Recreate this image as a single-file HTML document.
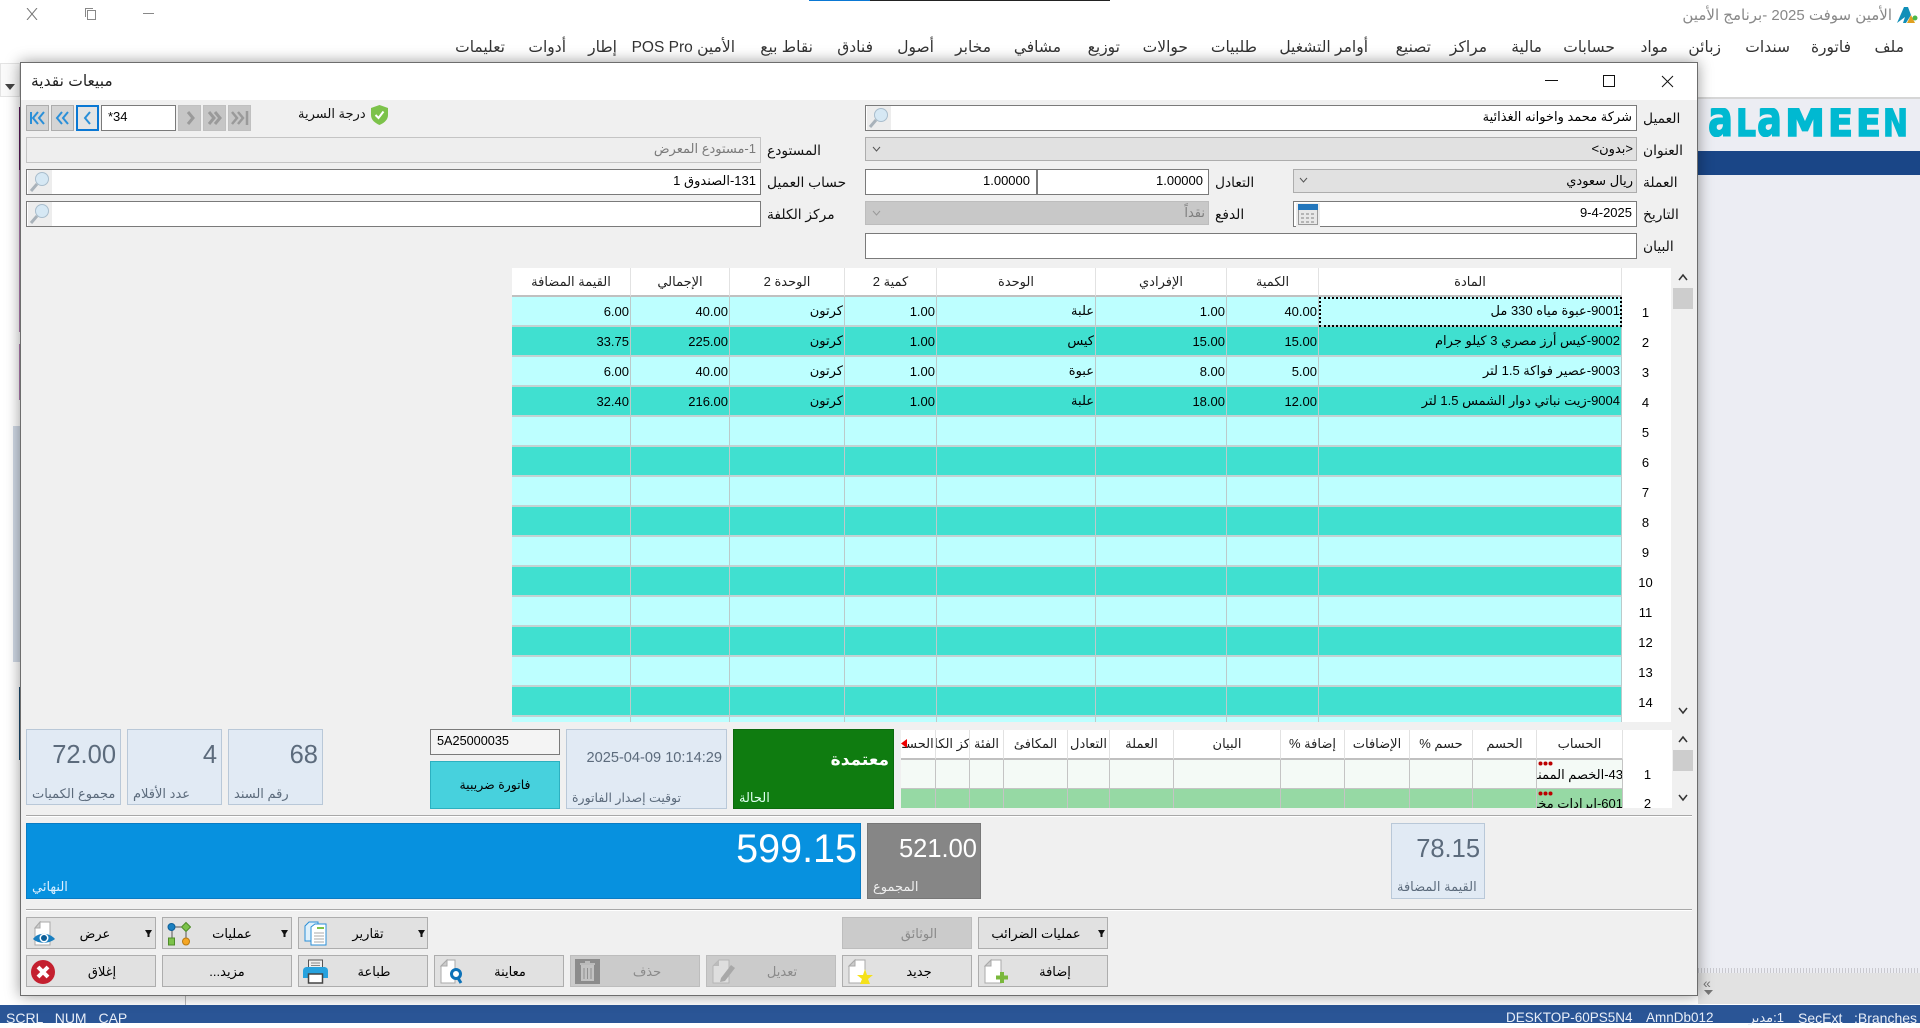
<!DOCTYPE html>
<html lang="ar"><head><meta charset="utf-8"><title>مبيعات نقدية</title>
<style>
*{box-sizing:border-box}
html,body{margin:0;padding:0;width:1920px;height:1023px;overflow:hidden;background:#fff;font-family:"Liberation Sans","DejaVu Sans",sans-serif;font-size:13px;color:#000}
.a{position:absolute}
.t{position:absolute;white-space:nowrap;height:20px;line-height:20px}
.r{direction:rtl}
.m{font-size:15.5px;color:#333;top:38px}
.f{position:absolute;background:#fff;border:1px solid #7a7a7a;height:26px;line-height:24px;direction:rtl;padding:0 4px;white-space:nowrap}
.s{position:absolute;background:#e1e1e1;border:1px solid #adadad;height:24px;line-height:22px;direction:rtl;padding:0 3px;white-space:nowrap}
.l{font-size:13.8px;color:#111;direction:rtl}
.g{position:absolute;width:24px;height:24px;background:#ededed;left:1px;top:0}
.nb{position:absolute;top:105px;width:23px;height:26px;background:#d4d4d4;border:1px solid #adadad}
.nd{background:#c6c6c6;border-color:#c0c0c0}
.st{position:absolute;background:#e1eaf4;border:1px solid #b9c8d8}
.st .n{position:absolute;right:4px;font-size:25.5px;color:#5c6b7c;white-space:nowrap}
.st .c{position:absolute;left:5px;font-size:13px;color:#5c6b7c;white-space:nowrap;direction:rtl}
.b{position:absolute;width:130px;height:32px;background:#e1e1e1;border:1px solid #adadad}
.bd{background:#cbcbcb;border-color:#bdbdbd;color:#8a8a8a}
.b2{top:955px}.b1{top:917px}
.bt{position:absolute;transform:translateX(-50%);white-space:nowrap;direction:rtl;font-size:13px;line-height:20px;height:20px}
.dd{position:absolute;width:9px;height:10px}
table{border-collapse:separate;border-spacing:0;table-layout:fixed;position:absolute;left:0;top:0}
#g td,#g th{height:30px;padding:0 1px;border-right:1px solid #bccaca;border-bottom:2px solid #c3d2d2;direction:rtl;text-align:right;white-space:nowrap;overflow:hidden;font-weight:normal;font-size:13px}
#g th{height:29px;text-align:center;background:#fff;border-right:1px solid #e2e2e2;border-bottom:2px solid #c0c0c0;color:#222}
#g .x{background:#bdffff}#g .y{background:#40e0d0}
#g td.h,#g th.h{background:#fff;border:0;text-align:center;padding-right:3px}
#d td,#d th{padding:0;direction:rtl;white-space:nowrap;overflow:hidden;font-weight:normal;font-size:13px;border-right:1px solid #c4c4c4}
#d th{height:30px;background:#fff;text-align:center;border-right:1px solid #e2e2e2;border-bottom:2px solid #c0c0c0;color:#222}
#d td{height:29px;border-bottom:1px solid #c4c4c4;text-align:right;vertical-align:bottom;padding-bottom:5px}
#d .p{background:#f4faf6}#d .q{background:#96d9a4}
#d .h{background:#fff!important;border:0!important;text-align:center!important;vertical-align:middle!important;padding-bottom:0}
</style></head><body>

<!-- page background -->
<div class="a" style="left:1698px;top:97px;width:222px;height:2px;background:#d6d6d6"></div>
<div class="a" style="left:1698px;top:99px;width:222px;height:870px;background:#ecedf3"></div>
<div class="a" style="left:1698px;top:151px;width:222px;height:24px;background:#1a4687"></div>
<div class="a" style="left:1698px;top:968px;width:222px;height:5px;background:repeating-linear-gradient(90deg,#c9c9cf 0 1px,#ecedf3 1px 3px)"></div>
<div class="a" style="left:1698px;top:973px;width:222px;height:31px;background:#e2e2e2"></div>
<div class="t" style="left:1703px;top:973px;color:#777;font-size:14px">«</div>
<svg class="a" style="left:1704px;top:990px" width="9" height="5"><path d="M0 0H9L4.500 5Z" fill="#777"/></svg>
<svg class="a" style="left:1707px;top:108px" width="202" height="29"><text y="28" font-family="DejaVu Sans" font-weight="bold" fill="#00b9d1" stroke="#00b9d1" stroke-width="1.500" font-size="38"><tspan x="1" font-size="50" textLength="25" lengthAdjust="spacingAndGlyphs">a</tspan><tspan x="29" textLength="20" lengthAdjust="spacingAndGlyphs">L</tspan><tspan x="50" font-size="50" textLength="25" lengthAdjust="spacingAndGlyphs">a</tspan><tspan x="78" textLength="40" lengthAdjust="spacingAndGlyphs">M</tspan><tspan x="121" textLength="25" lengthAdjust="spacingAndGlyphs">E</tspan><tspan x="149" textLength="25" lengthAdjust="spacingAndGlyphs">E</tspan><tspan x="176" textLength="25" lengthAdjust="spacingAndGlyphs">N</tspan></text></svg>

<!-- left strip -->
<div class="a" style="left:0;top:63px;width:20px;height:34px;background:#fafafa;border:1px solid #e4e4e4"></div>
<svg class="a" style="left:5px;top:84px" width="10" height="6"><path d="M0 0H10L5 6Z" fill="#444"/></svg>
<div class="a" style="left:19px;top:107px;width:1px;height:63px;background:#5a1a5a"></div>
<div class="a" style="left:19px;top:170px;width:1px;height:162px;background:#b47fb4"></div>
<div class="a" style="left:19px;top:344px;width:1px;height:56px;background:#b47fb4"></div>
<div class="a" style="left:13px;top:426px;width:7px;height:236px;background:#d0d9e5"></div>
<div class="a" style="left:19px;top:687px;width:1px;height:73px;background:#1b4a70"></div>
<div class="a" style="left:185px;top:996px;width:1px;height:9px;background:#bbb"></div>

<!-- top bar -->
<div class="a" style="left:809px;top:0;width:61px;height:1px;background:#0a78d4"></div>
<div class="a" style="left:870px;top:0;width:240px;height:1px;background:#222"></div>
<svg class="a" style="left:26px;top:8px" width="12" height="12" fill="none" stroke="#777"><path d="M1 0L11 12M11 0L1 12"/></svg>
<svg class="a" style="left:85px;top:8px" width="12" height="12" fill="none" stroke="#888"><rect x="2.500" y="2.500" width="8" height="9"/><path d="M0.500 9V0.500H8"/></svg>
<div class="a" style="left:143px;top:13px;width:11px;height:1px;background:#888"></div>
<div class="t r" style="right:28px;top:6px;color:#888;font-size:15px">الأمين سوفت 2025 -برنامج الأمين</div>
<svg class="a" style="left:1896px;top:6px" width="22" height="18"><path d="M1 17L8 1H12L15 9L10 17H7L9 11Z" fill="#118fb8"/><path d="M15 9L19 17H11Z" fill="#e0a020"/><circle cx="19" cy="12" r="2.500" fill="#4bb84b"/></svg>

<!-- menu -->
<div class="t m r" style="right:16px">ملف</div><div class="t m r" style="right:69px">فاتورة</div><div class="t m r" style="right:130px">سندات</div><div class="t m r" style="right:199px">زبائن</div><div class="t m r" style="right:252px">مواد</div><div class="t m r" style="right:305px">حسابات</div><div class="t m r" style="right:378px">مالية</div><div class="t m r" style="right:433px">مراكز</div><div class="t m r" style="right:489px">تصنيع</div><div class="t m r" style="right:552px">أوامر التشغيل</div><div class="t m r" style="right:663px">طلبيات</div><div class="t m r" style="right:732px">حوالات</div><div class="t m r" style="right:800px">توزيع</div><div class="t m r" style="right:859px">مشافي</div><div class="t m r" style="right:929px">مخابر</div><div class="t m r" style="right:986px">أصول</div><div class="t m r" style="right:1047px">فنادق</div><div class="t m r" style="right:1107px">نقاط بيع</div><div class="t m r" style="right:1185px">الأمين POS Pro</div><div class="t m r" style="right:1303px">إطار</div><div class="t m r" style="right:1354px">أدوات</div><div class="t m r" style="right:1415px">تعليمات</div>

<!-- status bar -->
<div class="a" style="left:0;top:1005px;width:1920px;height:18px;background:#2a5596"></div>
<div class="t" style="left:6px;top:1008px;color:#e8eef8;font-size:14px;word-spacing:8px">SCRL NUM CAP</div>
<div class="t" style="left:1506px;top:1008px;color:#e8eef8;font-size:13.5px">DESKTOP-60PS5N4</div>
<div class="t" style="left:1646px;top:1008px;color:#e8eef8;font-size:13.5px">AmnDb012</div>
<div class="t r" style="right:136px;top:1008px;color:#e8eef8;font-size:13px">1:مدير</div>
<div class="t" style="left:1798px;top:1008px;color:#e8eef8;font-size:14px">SecExt</div>
<div class="t" style="left:1854px;top:1008px;color:#e8eef8;font-size:14px">:Branches</div>

<!-- window -->
<div class="a" style="left:20px;top:62px;width:1678px;height:934px;background:#f0f0f0;border:1px solid #6d6d6d;box-shadow:0 0 14px rgba(0,0,0,.4)"></div>
<div class="a" style="left:21px;top:63px;width:1676px;height:37px;background:#fff"></div>
<div class="t r" style="left:31px;top:72px;font-size:15.5px;color:#222">مبيعات نقدية</div>
<div class="a" style="left:1545px;top:80px;width:13px;height:1px;background:#111"></div>
<div class="a" style="left:1603px;top:75px;width:12px;height:12px;border:1px solid #111"></div>
<svg class="a" style="left:1661px;top:75px" width="13" height="13" fill="none" stroke="#111"><path d="M1 1L12 12M12 1L1 12"/></svg>

<!-- nav -->
<div class="nb" style="left:26px"><svg width="21" height="24" fill="none" stroke="#2a8fd8" stroke-width="2"><path d="M4 6V18"/><path d="M11 6L6 12L11 18M17 6L12 12L17 18"/></svg></div>
<div class="nb" style="left:51px"><svg width="21" height="24" fill="none" stroke="#2a8fd8" stroke-width="2"><path d="M10 6L5 12L10 18M16 6L11 12L16 18"/></svg></div>
<div class="nb" style="left:76px;background:#e4e4e4;border:2px solid #0a78d4"><svg width="19" height="22" fill="none" stroke="#2a8fd8" stroke-width="2"><path d="M12 5L7 11L12 17"/></svg></div>
<div class="f" style="left:101px;top:105px;width:75px;direction:ltr;padding-left:6px;font-size:13px;line-height:22px">*34</div>
<div class="nb nd" style="left:178px"><svg width="21" height="24" fill="none" stroke="#9a9a9a" stroke-width="3"><path d="M9 6L14 12L9 18"/></svg></div>
<div class="nb nd" style="left:203px"><svg width="21" height="24" fill="none" stroke="#9a9a9a" stroke-width="3"><path d="M5 6L10 12L5 18M11 6L16 12L11 18"/></svg></div>
<div class="nb nd" style="left:228px"><svg width="21" height="24" fill="none" stroke="#9a9a9a" stroke-width="2.500"><path d="M3 6L8 12L3 18M9 6L14 12L9 18"/><path d="M18 5V19"/></svg></div>
<svg class="a" style="left:370px;top:105px" width="19" height="20"><path d="M9.500 0L18 3V10C18 15 14 18 9.500 20C5 18 1 15 1 10V3Z" fill="#7cc24a"/><path d="M5.500 10L8.500 13L13.500 6.500" fill="none" stroke="#fff" stroke-width="2"/></svg>
<div class="t r" style="left:298px;top:104px;font-size:13px;color:#111">درجة السرية</div>

<!-- form left -->
<div class="f" style="left:26px;top:137px;width:735px;background:#eee;border:1px solid #c4c4c4;color:#7a7a7a;line-height:22px">1-مستودع المعرض</div>
<div class="t l" style="left:767px;top:141px">المستودع</div>
<div class="f" style="left:26px;top:169px;width:735px;line-height:22px">131-الصندوق 1<span class="g" style="direction:ltr"><svg width="24" height="24" fill="none"><circle cx="14" cy="9" r="6.500" fill="#d6e8f4" stroke="#a9bdcc"/><path d="M9 14L3 21" stroke="#a9b2ba" stroke-width="3"/></svg></span></div>
<div class="t l" style="left:767px;top:173px">حساب العميل</div>
<div class="f" style="left:26px;top:201px;width:735px"><span class="g" style="direction:ltr"><svg width="24" height="24" fill="none"><circle cx="14" cy="9" r="6.500" fill="#d6e8f4" stroke="#a9bdcc"/><path d="M9 14L3 21" stroke="#a9b2ba" stroke-width="3"/></svg></span></div>
<div class="t l" style="left:767px;top:205px">مركز الكلفة</div>

<!-- form right -->
<div class="f" style="left:865px;top:105px;width:772px;line-height:22px">شركة محمد واخوانه الغذائية<span class="g" style="direction:ltr"><svg width="24" height="24" fill="none"><circle cx="14" cy="9" r="6.500" fill="#d6e8f4" stroke="#a9bdcc"/><path d="M9 14L3 21" stroke="#a9b2ba" stroke-width="3"/></svg></span></div>
<div class="t l" style="left:1643px;top:109px">العميل</div>
<div class="s" style="left:865px;top:137px;width:772px">&lt;بدون&gt;</div>
<svg class="a" style="left:872px;top:146px" width="9" height="6" fill="none" stroke="#555"><path d="M1 1L4.500 5L8 1"/></svg>
<div class="t l" style="left:1643px;top:141px">العنوان</div>
<div class="f" style="left:865px;top:169px;width:172px;text-align:right;direction:ltr;padding-right:6px;line-height:22px">1.00000</div>
<div class="f" style="left:1037px;top:169px;width:172px;text-align:right;direction:ltr;padding-right:5px;line-height:22px">1.00000</div>
<div class="t l" style="left:1215px;top:173px">التعادل</div>
<div class="s" style="left:1293px;top:169px;width:344px">ريال سعودي</div>
<svg class="a" style="left:1299px;top:177px" width="9" height="6" fill="none" stroke="#555"><path d="M1 1L4.500 5L8 1"/></svg>
<div class="t l" style="left:1643px;top:173px">العملة</div>
<div class="s" style="left:865px;top:201px;width:344px;background:#c8c8c8;border-color:#bdbdbd;color:#7e7e7e">نقداً</div>
<svg class="a" style="left:872px;top:210px" width="9" height="6" fill="none" stroke="#999"><path d="M1 1L4.500 5L8 1"/></svg>
<div class="t l" style="left:1215px;top:205px">الدفع</div>
<div class="f" style="left:1293px;top:201px;width:344px;line-height:22px;direction:ltr;text-align:right">9-4-2025</div>
<svg class="a" style="left:1296px;top:203px" width="24" height="24"><rect width="24" height="24" fill="#ededed"/><rect x="2.500" y="1.500" width="19" height="20" fill="#e8e8e8" stroke="#999"/><rect x="2" y="1" width="20" height="6" fill="#2276bc"/><g fill="#b5b5b5"><rect x="5" y="10" width="3" height="2"/><rect x="10" y="10" width="3" height="2"/><rect x="15" y="10" width="3" height="2"/><rect x="5" y="14" width="3" height="2"/><rect x="10" y="14" width="3" height="2"/><rect x="15" y="14" width="3" height="2"/><rect x="5" y="18" width="3" height="2"/><rect x="10" y="18" width="3" height="2"/><rect x="15" y="18" width="3" height="2"/></g></svg>
<div class="t l" style="left:1643px;top:205px">التاريخ</div>
<div class="f" style="left:865px;top:233px;width:772px"></div>
<div class="t l" style="left:1643px;top:237px">البيان</div>

<!-- main grid -->
<div id="g" class="a" style="left:512px;top:268px;width:1159px;height:454px;overflow:hidden;background:#fff">
<table style="width:1159px"><colgroup><col style="width:119px"><col style="width:99px"><col style="width:115px"><col style="width:92px"><col style="width:159px"><col style="width:131px"><col style="width:92px"><col style="width:303px"><col style="width:49px"></colgroup>
<tr><th>القيمة المضافة</th><th>الإجمالي</th><th>الوحدة 2</th><th>كمية 2</th><th>الوحدة</th><th>الإفرادي</th><th>الكمية</th><th>المادة</th><th class="h"></th></tr>
<tr class="x"><td>6.00</td><td>40.00</td><td>كرتون</td><td>1.00</td><td>علبة</td><td>1.00</td><td>40.00</td><td style="outline:2px dotted #000;outline-offset:-2px">9001-عبوة مياه 330 مل</td><td class="h">1</td></tr>
<tr class="y"><td>33.75</td><td>225.00</td><td>كرتون</td><td>1.00</td><td>كيس</td><td>15.00</td><td>15.00</td><td>9002-كيس أرز مصري 3 كيلو جرام</td><td class="h">2</td></tr>
<tr class="x"><td>6.00</td><td>40.00</td><td>كرتون</td><td>1.00</td><td>عبوة</td><td>8.00</td><td>5.00</td><td>9003-عصير فواكة 1.5 لتر</td><td class="h">3</td></tr>
<tr class="y"><td>32.40</td><td>216.00</td><td>كرتون</td><td>1.00</td><td>علبة</td><td>18.00</td><td>12.00</td><td>9004-زيت نباتي دوار الشمس 1.5 لتر</td><td class="h">4</td></tr>
<tr class="x"><td></td><td></td><td></td><td></td><td></td><td></td><td></td><td></td><td class="h">5</td></tr>
<tr class="y"><td></td><td></td><td></td><td></td><td></td><td></td><td></td><td></td><td class="h">6</td></tr>
<tr class="x"><td></td><td></td><td></td><td></td><td></td><td></td><td></td><td></td><td class="h">7</td></tr>
<tr class="y"><td></td><td></td><td></td><td></td><td></td><td></td><td></td><td></td><td class="h">8</td></tr>
<tr class="x"><td></td><td></td><td></td><td></td><td></td><td></td><td></td><td></td><td class="h">9</td></tr>
<tr class="y"><td></td><td></td><td></td><td></td><td></td><td></td><td></td><td></td><td class="h">10</td></tr>
<tr class="x"><td></td><td></td><td></td><td></td><td></td><td></td><td></td><td></td><td class="h">11</td></tr>
<tr class="y"><td></td><td></td><td></td><td></td><td></td><td></td><td></td><td></td><td class="h">12</td></tr>
<tr class="x"><td></td><td></td><td></td><td></td><td></td><td></td><td></td><td></td><td class="h">13</td></tr>
<tr class="y"><td></td><td></td><td></td><td></td><td></td><td></td><td></td><td></td><td class="h">14</td></tr>
<tr class="x"><td></td><td></td><td></td><td></td><td></td><td></td><td></td><td></td><td class="h"></td></tr>
</table></div>
<svg class="a" style="left:1677px;top:273px" width="12" height="8" fill="none" stroke="#333" stroke-width="1.500"><path d="M2 7L6 2L10 7"/></svg>
<div class="a" style="left:1673px;top:288px;width:20px;height:21px;background:#cdcdcd"></div>
<svg class="a" style="left:1677px;top:707px" width="12" height="8" fill="none" stroke="#333" stroke-width="1.500"><path d="M2 1L6 6L10 1"/></svg>

<!-- stat boxes -->
<div class="st" style="left:26px;top:729px;width:95px;height:76px"><span class="n" style="top:11px">72.00</span><span class="c" style="top:56px">مجموع الكميات</span></div>
<div class="st" style="left:127px;top:729px;width:95px;height:76px"><span class="n" style="top:11px">4</span><span class="c" style="top:56px">عدد الأقلام</span></div>
<div class="st" style="left:228px;top:729px;width:95px;height:76px"><span class="n" style="top:11px">68</span><span class="c" style="top:56px">رقم السند</span></div>
<div class="f" style="left:430px;top:729px;width:130px;direction:ltr;padding-left:6px;font-size:12.7px;background:#f4f4f4;line-height:22px">5A25000035</div>
<div class="a" style="left:430px;top:761px;width:130px;height:48px;background:#47d1dd;border:1px solid #2cb0c0;text-align:center;line-height:47px;direction:rtl;font-size:12.5px">فاتورة ضريبية</div>
<div class="st" style="left:566px;top:729px;width:161px;height:80px"><span class="n" style="top:20px;font-size:14.6px;white-space:nowrap">2025-04-09 10:14:29</span><span class="c" style="top:60px;font-size:12.500px">توقيت إصدار الفاتورة</span></div>
<div class="a" style="left:733px;top:729px;width:161px;height:80px;background:#0f7c10;border:1px solid #0c6a0d"><span class="a" style="right:4px;top:20px;color:#fff;font-size:17px;font-weight:bold;direction:rtl">معتمدة</span><span class="a" style="left:5px;top:60px;color:#dfe;font-size:13px;direction:rtl">الحالة</span></div>

<!-- lower grid -->
<div id="d" class="a" style="left:901px;top:730px;width:771px;height:78px;overflow:hidden;background:#fff">
<table style="width:771px"><colgroup><col style="width:35px"><col style="width:34px"><col style="width:34px"><col style="width:64px"><col style="width:42px"><col style="width:64px"><col style="width:107px"><col style="width:64px"><col style="width:65px"><col style="width:63px"><col style="width:64px"><col style="width:86px"><col style="width:49px"></colgroup>
<tr><th>الحسـ</th><th>كز الكلا</th><th>الفئة</th><th>المكافئ</th><th>التعادل</th><th>العملة</th><th>البيان</th><th>إضافة %</th><th>الإضافات</th><th>حسم %</th><th>الحسم</th><th>الحساب</th><th class="h"></th></tr>
<tr class="p"><td class="p"></td><td class="p"></td><td class="p"></td><td class="p"></td><td class="p"></td><td class="p"></td><td class="p"></td><td class="p"></td><td class="p"></td><td class="p"></td><td class="p"></td><td class="p">43-الخصم الممنوح</td><td class="h">1</td></tr>
<tr><td class="q"></td><td class="q"></td><td class="q"></td><td class="q"></td><td class="q"></td><td class="q"></td><td class="q"></td><td class="q"></td><td class="q"></td><td class="q"></td><td class="q"></td><td class="q">601-ايرادات مخزون</td><td class="h">2</td></tr>
</table></div>
<svg class="a" style="left:901px;top:739px" width="7" height="9"><path d="M0 4.500L6 0V9Z" fill="#e00"/></svg>
<svg class="a" style="left:1538px;top:761px" width="15" height="5"><circle cx="2.500" cy="2.500" r="2" fill="#b00"/><circle cx="7.500" cy="2.500" r="2" fill="#b00"/><circle cx="12.500" cy="2.500" r="2" fill="#b00"/></svg>
<svg class="a" style="left:1538px;top:791px" width="15" height="5"><circle cx="2.500" cy="2.500" r="2" fill="#b00"/><circle cx="7.500" cy="2.500" r="2" fill="#b00"/><circle cx="12.500" cy="2.500" r="2" fill="#b00"/></svg>
<svg class="a" style="left:1677px;top:735px" width="12" height="8" fill="none" stroke="#333" stroke-width="1.500"><path d="M2 7L6 2L10 7"/></svg>
<div class="a" style="left:1673px;top:750px;width:20px;height:21px;background:#cdcdcd"></div>
<svg class="a" style="left:1677px;top:794px" width="12" height="8" fill="none" stroke="#333" stroke-width="1.500"><path d="M2 1L6 6L10 1"/></svg>

<!-- separators -->
<div class="a" style="left:26px;top:815px;width:1666px;height:1px;background:#a8a8a8;border-bottom:0"></div>
<div class="a" style="left:26px;top:816px;width:1666px;height:1px;background:#fff"></div>
<div class="a" style="left:26px;top:909px;width:1666px;height:1px;background:#a8a8a8"></div>
<div class="a" style="left:26px;top:910px;width:1666px;height:1px;background:#fff"></div>

<!-- totals -->
<div class="a" style="left:26px;top:823px;width:835px;height:76px;background:#0791df;border:1px solid #0a7cc4"><span class="a" style="right:3px;top:3px;color:#fff;font-size:39.5px;white-space:nowrap">599.15</span><span class="a" style="left:5px;top:55px;color:#dcefff;font-size:13px;direction:rtl">النهائي</span></div>
<div class="a" style="left:867px;top:823px;width:114px;height:76px;background:#868686;border:1px solid #777"><span class="a" style="right:3px;top:11px;color:#fff;font-size:25.5px;white-space:nowrap">521.00</span><span class="a" style="left:5px;top:55px;color:#eee;font-size:13px;direction:rtl">المجموع</span></div>
<div class="st" style="left:1391px;top:823px;width:94px;height:76px"><span class="n" style="top:11px">78.15</span><span class="c" style="top:55px">القيمة المضافة</span></div>

<!-- buttons -->
<div class="b b1" style="left:26px"></div><div class="b b1" style="left:162px"></div><div class="b b1" style="left:298px"></div><div class="b b1 bd" style="left:842px"></div><div class="b b1" style="left:978px"></div>
<div class="b b2" style="left:26px"></div><div class="b b2" style="left:162px"></div><div class="b b2" style="left:298px"></div><div class="b b2" style="left:434px"></div><div class="b b2 bd" style="left:570px"></div><div class="b b2 bd" style="left:706px"></div><div class="b b2" style="left:842px"></div><div class="b b2" style="left:978px"></div>
<div class="bt" style="left:95px;top:924px">عرض</div><div class="bt" style="left:232px;top:924px">عمليات</div><div class="bt" style="left:368px;top:924px">تقارير</div><div class="bt" style="left:919px;top:924px;color:#8a8a8a">الوثائق</div><div class="bt" style="left:1036px;top:924px">عمليات الضرائب</div>
<div class="bt" style="left:102px;top:962px">إغلاق</div><div class="bt" style="left:227px;top:962px">مزيد...</div><div class="bt" style="left:374px;top:962px">طباعة</div><div class="bt" style="left:510px;top:962px">معاينة</div><div class="bt" style="left:647px;top:962px;color:#8a8a8a">حذف</div><div class="bt" style="left:782px;top:962px;color:#8a8a8a">تعديل</div><div class="bt" style="left:919px;top:962px">جديد</div><div class="bt" style="left:1055px;top:962px">إضافة</div>
<svg class="dd" style="left:144px;top:929px"><path d="M1 1H8L5.500 5V8H3.500V5Z" fill="#111"/></svg><svg class="dd" style="left:280px;top:929px"><path d="M1 1H8L5.500 5V8H3.500V5Z" fill="#111"/></svg><svg class="dd" style="left:417px;top:929px"><path d="M1 1H8L5.500 5V8H3.500V5Z" fill="#111"/></svg><svg class="dd" style="left:1097px;top:929px"><path d="M1 1H8L5.500 5V8H3.500V5Z" fill="#111"/></svg>

<!-- icons: eye -->
<svg class="a" style="left:32px;top:921px" width="24" height="25"><path d="M3 7L8 1H18V24H3Z" fill="#fff" stroke="#aaa"/><path d="M3 7L8 1V7Z" fill="#ccc" stroke="#aaa"/><path d="M1 18C6 11 17 11 23 18C17 23 6 23 1 18Z" fill="#1a7fc0"/><circle cx="12" cy="17" r="4.500" fill="#fff"/><circle cx="12" cy="17" r="3" fill="#0d5f99"/></svg>
<!-- icon: flow -->
<svg class="a" style="left:167px;top:921px" width="24" height="25"><path d="M5 6H19M5 6V18M19 6V18" stroke="#555" fill="none"/><circle cx="4.500" cy="6" r="3.500" fill="#1a7fc0" stroke="#0d5f99"/><path d="M19 1.500L23.500 6L19 10.500L14.500 6Z" fill="#7cc24a" stroke="#4f8c2a"/><rect x="1.500" y="17" width="6" height="7" fill="#7cc24a" stroke="#4f8c2a"/><circle cx="19" cy="20.500" r="3.500" fill="#f5a623" stroke="#b97a12"/></svg>
<!-- icon: reports -->
<svg class="a" style="left:304px;top:921px" width="23" height="25"><path d="M1 5L5 1H14V20H1Z" fill="#dff0fb" stroke="#2a8fd8"/><path d="M7 6L11 3H22V24H7Z" fill="#fff" stroke="#2a8fd8"/><path d="M13 7H20" stroke="#7cc24a" stroke-width="2"/><path d="M10 12H20M10 15H20M10 18H20M10 21H20" stroke="#aaa"/></svg>
<!-- icon: close -->
<svg class="a" style="left:31px;top:960px" width="24" height="24"><circle cx="12" cy="12" r="12" fill="#c4202f"/><path d="M7 7L17 17M17 7L7 17" stroke="#fff" stroke-width="4"/></svg>
<!-- icon: print -->
<svg class="a" style="left:303px;top:959px" width="25" height="25"><rect x="5.500" y="1" width="14" height="9" fill="#eee" stroke="#555"/><path d="M8 4H17M8 6.500H17" stroke="#888"/><path d="M0 12C0 9 2 8 4 8H21C23 8 25 9 25 12V19H0Z" fill="#27a2de"/><rect x="5.500" y="15" width="14" height="9" fill="#fff" stroke="#444" stroke-width="1.500"/></svg>
<!-- icon: preview -->
<svg class="a" style="left:440px;top:959px" width="24" height="25"><path d="M1 7L7 1H15V24H1Z" fill="#fff" stroke="#aaa"/><path d="M1 7L7 1V7Z" fill="#ccc" stroke="#aaa"/><circle cx="16" cy="15" r="4.500" fill="#fff" stroke="#0d72b8" stroke-width="3"/><path d="M18 19L21 24" stroke="#0d72b8" stroke-width="3"/></svg>
<!-- icon: trash -->
<svg class="a" style="left:575px;top:959px" width="25" height="25"><rect width="25" height="25" fill="#8c8c8c"/><rect x="6" y="6" width="13" height="16" fill="#c2c2c2"/><path d="M5 5H20M10 3H15" stroke="#bbb" stroke-width="2"/><path d="M9 9V20M12.500 9V20M16 9V20" stroke="#909090"/></svg>
<!-- icon: edit -->
<svg class="a" style="left:712px;top:959px" width="25" height="25"><path d="M1 7L7 1H17V24H1Z" fill="#dedede" stroke="#b5b5b5"/><path d="M1 7L7 1V7Z" fill="#bbb"/><path d="M9 19L19 6L23 9L13 22L8 23Z" fill="#a8a8a8"/></svg>
<!-- icon: new -->
<svg class="a" style="left:848px;top:959px" width="25" height="25"><path d="M1 7L7 1H17V24H1Z" fill="#fff" stroke="#aaa"/><path d="M1 7L7 1V7Z" fill="#ccc" stroke="#aaa"/><path d="M17 10L19 16L25 16L20 20L22 25H12L14 20L9 16L15 16Z" fill="#f5e11a"/></svg>
<!-- icon: add -->
<svg class="a" style="left:984px;top:959px" width="25" height="25"><path d="M1 7L7 1H17V24H1Z" fill="#fff" stroke="#aaa"/><path d="M1 7L7 1V7Z" fill="#ccc" stroke="#aaa"/><path d="M18 13V24M12 18.500H24" stroke="#7ab83c" stroke-width="4"/></svg>
</body></html>
